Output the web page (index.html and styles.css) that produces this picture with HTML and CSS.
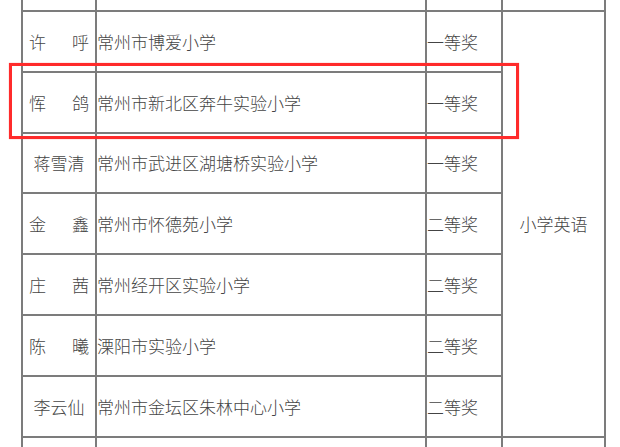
FILE: index.html
```html
<!DOCTYPE html>
<html lang="zh">
<head>
<meta charset="utf-8">
<link rel="stylesheet" href="styles.css">
</head>
<body>
<div class="sheet">
  <div class="grid">
    <div class="cell"></div>
    <div class="cell"></div>
    <div class="cell"></div>
    <div class="cell"></div>

    <div class="cell name two"><span>许</span><span>呼</span></div>
    <div class="cell school">常州市博爱小学</div>
    <div class="cell award">一等奖</div>
    <div class="cell category">小学英语</div>

    <div class="cell name two"><span>恽</span><span>鸽</span></div>
    <div class="cell school">常州市新北区奔牛实验小学</div>
    <div class="cell award">一等奖</div>

    <div class="cell name">蒋雪清</div>
    <div class="cell school">常州市武进区湖塘桥实验小学</div>
    <div class="cell award">一等奖</div>

    <div class="cell name two"><span>金</span><span>鑫</span></div>
    <div class="cell school">常州市怀德苑小学</div>
    <div class="cell award">二等奖</div>

    <div class="cell name two"><span>庄</span><span>茜</span></div>
    <div class="cell school">常州经开区实验小学</div>
    <div class="cell award">二等奖</div>

    <div class="cell name two"><span>陈</span><span>曦</span></div>
    <div class="cell school">溧阳市实验小学</div>
    <div class="cell award">二等奖</div>

    <div class="cell name">李云仙</div>
    <div class="cell school">常州市金坛区朱林中心小学</div>
    <div class="cell award">二等奖</div>

    <div class="cell"></div>
    <div class="cell"></div>
    <div class="cell"></div>
    <div class="cell"></div>
  </div>
  <div class="highlight"></div>
</div>
</body>
</html>
```

FILE: styles.css
```css
html, body {
  margin: 0;
  padding: 0;
  background: #ffffff;
  overflow: hidden;
}

.sheet {
  position: relative;
  width: 620px;
  height: 447px;
  overflow: hidden;
}

.grid {
  margin-left: 21px;
  width: 581px;
  display: grid;
  grid-template-columns: 72px 328px 74px 101px;
  grid-template-rows: 10px repeat(7, 58.8px) 12px;
  gap: 2px;
  padding: 0 2px;
  background: #7c7c7c;
  font-family: "Noto Sans CJK SC", "Noto Sans", sans-serif;
  font-size: 17px;
  font-weight: 300;
  color: #444444;
}

.cell {
  background: #ffffff;
  display: flex;
  align-items: center;
  white-space: nowrap;
  overflow: hidden;
  line-height: 1;
}

.name {
  justify-content: center;
}

.name.two {
  justify-content: space-between;
  padding: 0 6px;
}

.school,
.award {
  justify-content: flex-start;
}

.category {
  grid-row: 2 / span 7;
  grid-column: 4;
  justify-content: center;
}

.highlight {
  position: absolute;
  left: 9px;
  top: 63px;
  width: 504px;
  height: 70px;
  border: 3px solid #ff2b2b;
  box-shadow: 0 0 1px rgba(255, 60, 60, 0.6);
}
```
